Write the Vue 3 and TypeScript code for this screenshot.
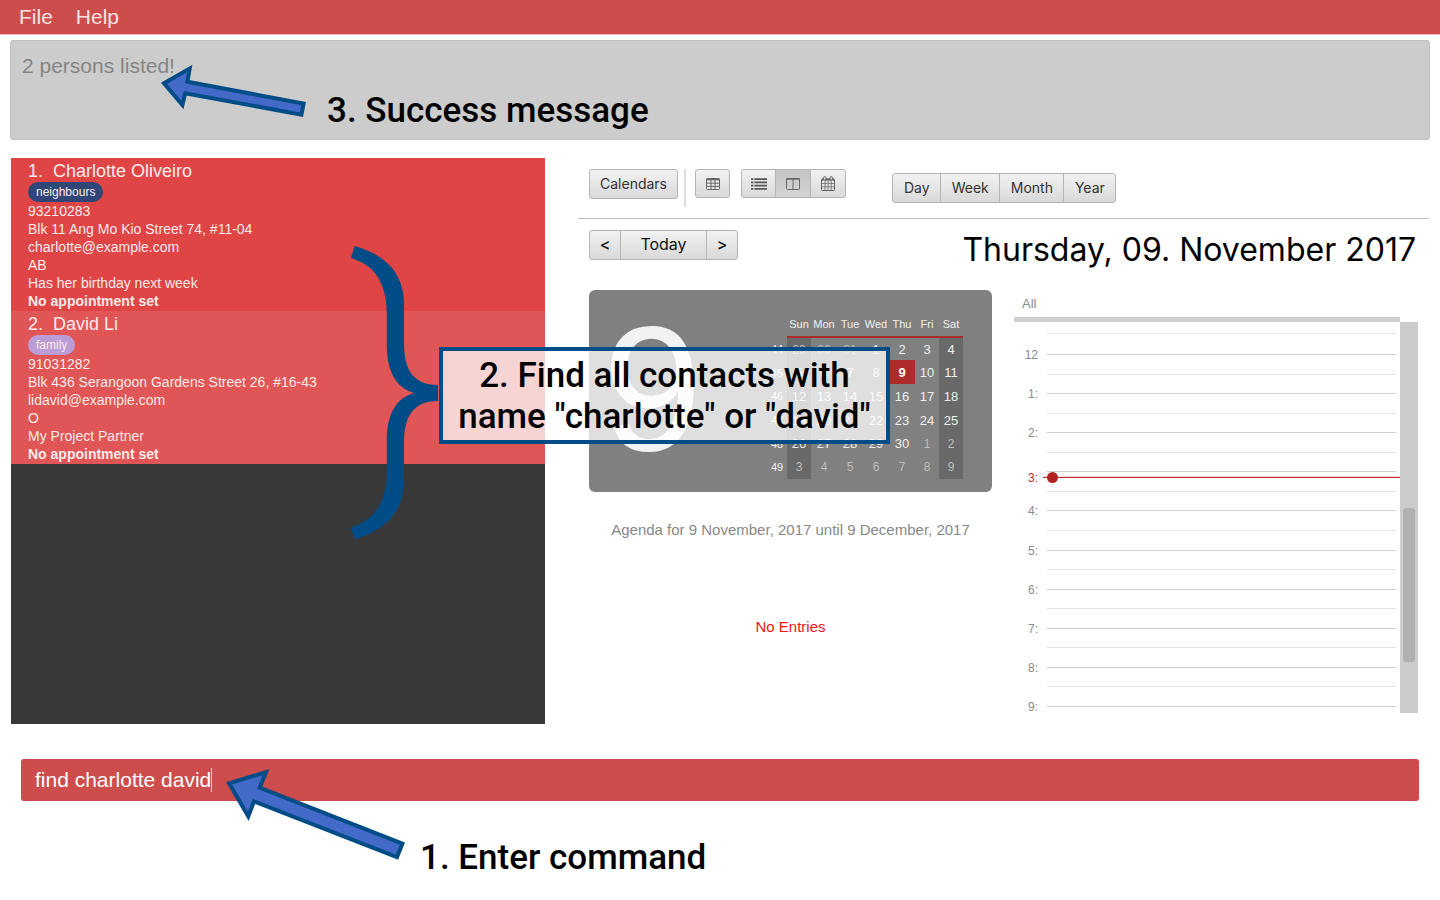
<script setup lang="ts">
import { ref } from 'vue'

interface Person {
  id: number
  name: string
  tag: string
  tagClass: string
  lines: string[]
}

interface DayCell {
  day: number
  muted?: boolean
  today?: boolean
}

interface Week {
  week: number
  days: DayCell[]
}

const command = ref('find charlotte david')

const persons: Person[] = [
  {
    id: 1,
    name: 'Charlotte Oliveiro',
    tag: 'neighbours',
    tagClass: 'tag-navy',
    lines: ['93210283', 'Blk 11 Ang Mo Kio Street 74, #11-04', 'charlotte@example.com', 'AB', 'Has her birthday next week'],
  },
  {
    id: 2,
    name: 'David Li',
    tag: 'family',
    tagClass: 'tag-purple',
    lines: ['91031282', 'Blk 436 Serangoon Gardens Street 26, #16-43', 'lidavid@example.com', 'O', 'My Project Partner'],
  },
]

const weekdays = ['Sun', 'Mon', 'Tue', 'Wed', 'Thu', 'Fri', 'Sat']

// The grid opens on Sunday 29 October 2017, week 44.
const weeks: Week[] = Array.from({ length: 6 }, (_, w) => ({
  week: 44 + w,
  days: Array.from({ length: 7 }, (_, d) => {
    const date = new Date(2017, 9, 29 + w * 7 + d)
    return {
      day: date.getDate(),
      muted: date.getMonth() !== 10,
      today: date.getMonth() === 10 && date.getDate() === 9,
    }
  }),
}))

const hours = ['12', '1:', '2:', '', '4:', '5:', '6:', '7:', '8:']
const ranges = ['Day', 'Week', 'Month', 'Year']
</script>

<template>
  <div class="app">
    <nav class="menu">
      <button type="button">File</button>
      <button type="button">Help</button>
    </nav>

    <section class="result" role="status">2 persons listed!</section>

    <main class="main">
      <ul class="persons">
        <li v-for="p in persons" :key="p.id" class="person">
          <h2><span class="num">{{ p.id }}.</span>{{ p.name }}</h2>
          <div class="tags"><span class="tag" :class="p.tagClass">{{ p.tag }}</span></div>
          <p v-for="line in p.lines" :key="line">{{ line }}</p>
          <p class="appointment">No appointment set</p>
        </li>
      </ul>

      <section class="calendar">
        <div class="toolbar">
          <button type="button" class="btn calendars">Calendars</button>
          <span class="separator"></span>
          <button type="button" class="btn icon" aria-label="Add calendar">
            <svg width="14" height="12" viewBox="0 0 14 12"><rect x="0.5" y="0.5" width="13" height="11" rx="1" fill="none" stroke="#666" /><path d="M0 1.5H14" stroke="#666" stroke-width="1.6" /><path d="M1 5.2H13M1 8.4H13M5 2V11M9 2V11" stroke="#666" fill="none" /></svg>
          </button>
          <div class="group views">
            <button type="button" class="btn icon" aria-label="Agenda layout">
              <svg width="16" height="12" viewBox="0 0 16 12"><path d="M0 1.2H2.4M0 4.4H2.4M0 7.6H2.4M0 10.8H2.4M3.4 1.2H16M3.4 4.4H16M3.4 7.6H16M3.4 10.8H16" stroke="#555" stroke-width="1.7" /></svg>
            </button>
            <button type="button" class="btn icon selected" aria-label="Column layout" aria-pressed="true">
              <svg width="14" height="12" viewBox="0 0 14 12"><rect x="0.5" y="0.5" width="13" height="11" rx="1" fill="none" stroke="#666" /><path d="M0 1H14" stroke="#666" stroke-width="1.5" /><path d="M7 1V11" stroke="#666" /></svg>
            </button>
            <button type="button" class="btn icon" aria-label="Calendar layout">
              <svg width="14" height="15" viewBox="0 0 14 15"><rect x="0.5" y="3" width="13" height="11.5" rx="1" fill="none" stroke="#666" /><path d="M1 3.6H13" stroke="#666" stroke-width="2" /><path d="M1 7.4H13M1 10.8H13M4 4.5V14M7.1 4.5V14M10.2 4.5V14" stroke="#777" stroke-width="0.9" /><rect x="2.6" y="0.6" width="2.4" height="3.6" rx="1.1" fill="#e4e4e4" stroke="#666" /><rect x="9" y="0.6" width="2.4" height="3.6" rx="1.1" fill="#e4e4e4" stroke="#666" /></svg>
            </button>
          </div>
          <div class="group ranges">
            <button v-for="r in ranges" :key="r" type="button" class="btn">{{ r }}</button>
          </div>
        </div>

        <div class="datebar">
          <div class="group nav">
            <button type="button" class="btn arrow" aria-label="Previous day">&lt;</button>
            <button type="button" class="btn today">Today</button>
            <button type="button" class="btn arrow" aria-label="Next day">&gt;</button>
          </div>
          <h1>Thursday, 09. November 2017</h1>
        </div>

        <div class="day">
          <div class="overview">
            <div class="month">
              <div class="big">9</div>
              <table>
                <colgroup>
                  <col class="c20" />
                  <col class="c24" />
                  <col class="c26" />
                  <col class="c26" />
                  <col class="c26" />
                  <col class="c26" />
                  <col class="c24" />
                  <col class="c24" />
                </colgroup>
                <thead>
                  <tr>
                    <th class="week"></th>
                    <th v-for="d in weekdays" :key="d" scope="col">{{ d }}</th>
                  </tr>
                </thead>
                <tbody>
                  <tr v-for="w in weeks" :key="w.week">
                    <th class="week" scope="row">{{ w.week }}</th>
                    <td v-for="(c, i) in w.days" :key="i" :class="{ muted: c.muted, now: c.today }">{{ c.day }}</td>
                  </tr>
                </tbody>
              </table>
            </div>
            <p class="agenda">Agenda for 9 November, 2017 until 9 December, 2017</p>
            <p class="none">No Entries</p>
          </div>

          <div class="timeline">
            <div class="allday">All</div>
            <div class="body">
              <div class="slots">
                <div class="lead"></div>
                <div v-for="(h, i) in hours" :key="i" class="slot">
                  <span class="hour">{{ h }}</span>
                  <div v-if="h === ''" class="current"><span class="hour">3:</span><i></i></div>
                </div>
                <div class="tail"><span class="hour">9:</span></div>
              </div>
              <div class="scroll"><div class="thumb"></div></div>
            </div>
          </div>
        </div>
      </section>
    </main>

    <form class="command" @submit.prevent>
      <input v-model="command" type="text" aria-label="Command" spellcheck="false" />
      <span class="caret"></span>
    </form>

    <svg class="marks" width="450" height="870" viewBox="0 0 450 870" aria-hidden="true">
      <g fill="#446ac9" stroke="#004c86" stroke-width="4" stroke-miterlimit="10">
        <path d="M164 83.3L189.7 68.6L187.4 81.7L303.6 103.6L301.4 114.6L185.2 93.2L182.4 105Z" />
        <path d="M229 783.3L266 772.2L259.6 787.7L402.4 843.6L397 857.2L254 801.4L248.3 816.3Z" />
      </g>
      <path fill="#004c86" d="M354.6 246C373 251 386 260 393.6 270C400 279 404 290 404 304V343C404 368 412 385 438 385V401C412 401 404 418 404 443V481C404 495 400 506 393.6 515C386 525 373 534 354.6 539.3L351 527.7C363 523 371 518 376.4 510C383 501 386.8 488 386.8 472V441C386.8 414 396 398 414.3 393C396 388 386.8 371 386.8 345V313C386.8 297 383 285 376.4 275C371 267 363 262 351 257.7Z" />
    </svg>
    <p class="note success">3. Success message</p>
    <p class="note find">2. Find all contacts with<br />name "charlotte" or "david"</p>
    <p class="note enter">1. Enter command</p>
  </div>
</template>

<style>
body {
  margin: 0;
  background: #fff;
}
</style>

<style scoped>
.app {
  position: relative;
  min-height: 100vh;
  font-family: "Liberation Sans", Arial, sans-serif;
}
h1,
h2,
p,
ul {
  margin: 0;
  padding: 0;
  font-weight: 400;
}
button,
input {
  font-family: inherit;
  margin: 0;
}

.menu {
  display: flex;
  gap: 23px;
  height: 34px;
  padding-left: 19px;
  background: #cd4d4d;
  border-bottom: 1px solid #e9b5b5;
}
.menu button {
  padding: 0;
  border: 0;
  background: none;
  color: #fbe3e3;
  font-size: 21px;
}

.result {
  box-sizing: border-box;
  height: 100px;
  margin: 5px 10px 0;
  padding: 13px 11px;
  border: 1px solid #c0c0c0;
  border-radius: 3px;
  background: #ccc;
  color: #858585;
  font-size: 21px;
  line-height: 23px;
}

.main {
  display: flex;
  gap: 33px;
  margin: 18px 11px 0;
}
.persons {
  flex: 534 1 0;
  min-height: 566px;
  background: #383838;
  list-style: none;
  color: #fdeaea;
}
.person {
  padding: 3px 17px 1px;
  background: #df4545;
  font-size: 14px;
  line-height: 18px;
}
.person:nth-child(even) {
  background: #e05555;
}
.person h2 {
  font-size: 18px;
  line-height: 21px;
}
.num {
  margin-right: 10px;
}
.tags {
  display: flex;
  height: 20px;
}
.tag {
  padding: 0 8px;
  border-radius: 10px;
  font-size: 12px;
  line-height: 20px;
}
.tag-navy {
  background: #304578;
}
.tag-purple {
  background: #bb9cd6;
}
.person .appointment {
  font-weight: 700;
}

.calendar {
  flex: 851 1 0;
  min-width: 0;
}
.toolbar {
  display: flex;
  align-items: flex-start;
  height: 49px;
  padding: 11px 11px 0;
  border-bottom: 1px solid #bdbdbd;
}
.btn {
  box-sizing: border-box;
  height: 30px;
  padding: 0 0 2px;
  border: 1px solid #b4b4b4;
  border-radius: 3px;
  background: linear-gradient(#f2f2f2, #d9d9d9);
  color: #333;
  font-family: Inter, sans-serif;
  font-size: 14px;
}
.calendars {
  width: 89px;
}
.separator {
  width: 2px;
  height: 38px;
  margin: 0 9px 0 6px;
  background: #ddd;
}
.btn.icon {
  display: flex;
  align-items: center;
  justify-content: center;
  width: 35px;
  height: 29px;
  padding: 0;
}
.group {
  display: flex;
}
.group .btn:not(:first-child) {
  margin-left: -1px;
  border-top-left-radius: 0;
  border-bottom-left-radius: 0;
}
.group .btn:not(:last-child) {
  border-top-right-radius: 0;
  border-bottom-right-radius: 0;
}
.group .icon:not(:first-child) {
  width: 36px;
}
.btn.selected {
  background: linear-gradient(#c4c4c4, #d4d4d4);
}
.views {
  margin-left: 11px;
}
.ranges {
  margin: 4px 0 0 46px;
}
.ranges .btn {
  padding: 0 10px 2px 11px;
}

.datebar {
  display: flex;
  align-items: flex-start;
  justify-content: space-between;
  padding: 11px 13px 0 11px;
}
.nav .btn {
  color: #111;
  font-size: 16px;
}
.nav .arrow {
  width: 32px;
  font-weight: 500;
}
.nav .today {
  width: 87px;
}
h1 {
  color: #000;
  font-family: Inter, sans-serif;
  font-size: 32px;
  line-height: 40px;
}

.day {
  display: flex;
  gap: 22px;
  padding: 20px 11px 0;
}
.overview {
  flex: 403 1 0;
  text-align: center;
}
.month {
  display: flex;
  justify-content: space-between;
  box-sizing: border-box;
  height: 202px;
  padding: 26px 29px 0 14px;
  border-radius: 6px;
  background: #808080;
}
.big {
  width: 96px;
  color: #f2f2f2;
  font-size: 178px;
  line-height: 146px;
}
table {
  border-collapse: collapse;
  table-layout: fixed;
  width: 196px;
  height: 163px;
  color: #f0f0f0;
  font-size: 13px;
}
.c20 {
  width: 20px;
}
.c24 {
  width: 24px;
}
.c26 {
  width: 26px;
}
th,
td {
  padding: 1px 0 0;
  font-weight: 400;
}
thead th {
  height: 16px;
  padding: 0 0 4px;
  font-size: 11px;
}
thead th:not(.week) {
  border-bottom: 2px solid #ad2b2b;
}
.week {
  font-size: 11px;
}
tbody tr {
  height: 23px;
}
tbody tr:nth-child(even) {
  height: 24px;
}
tbody td:nth-child(2),
tbody td:last-child {
  background: #696969;
}
td.muted {
  color: #bdbdbd;
  font-size: 12px;
}
td.now {
  background: #ad2b2b;
  color: #fff;
  font-weight: 700;
}
.agenda {
  margin-top: 28px;
  color: #888;
  font-size: 15px;
  line-height: 20px;
}
.none {
  margin-top: 77px;
  color: #f01414;
  font-size: 15px;
  line-height: 20px;
}

.timeline {
  display: flex;
  flex-direction: column;
  flex: 404 1 0;
  color: #8a8a8a;
}
.allday {
  height: 27px;
  margin-right: 18px;
  padding-left: 8px;
  border-bottom: 5px solid #d0d0d0;
  font-size: 13px;
  line-height: 28px;
}
.body {
  display: flex;
  height: 391px;
}
.slots {
  display: flex;
  flex: 1;
  flex-direction: column;
}
.lead {
  height: 20px;
  margin: 11px 4px 0 33px;
  border-top: 1px solid #e4e4e4;
}
.slot {
  position: relative;
  flex: 1;
}
.slot::before,
.slot::after,
.tail::before {
  content: "";
  position: absolute;
  top: 0;
  left: 33px;
  right: 4px;
  height: 1px;
  background: #d0d0d0;
}
.slot::after {
  top: 50%;
  background: #e4e4e4;
}
.tail {
  position: relative;
  height: 7px;
}
.hour {
  position: absolute;
  top: -7px;
  left: 0;
  width: 24px;
  font-size: 12px;
  line-height: 16px;
  text-align: right;
}
.current {
  position: absolute;
  top: 6px;
  left: 0;
  right: 0;
  z-index: 1;
  color: #c22b35;
}
.current::before {
  content: "";
  position: absolute;
  top: 0;
  left: 29px;
  right: 0;
  height: 1px;
  background: #bf3038;
  box-shadow: 0 -1px #f0d0d0;
}
.current i {
  position: absolute;
  top: -5px;
  left: 33px;
  width: 11px;
  height: 11px;
  border-radius: 50%;
  background: #b22222;
}
.scroll {
  box-sizing: border-box;
  width: 18px;
  padding: 186px 3px 0;
  background: #ccc;
}
.thumb {
  height: 154px;
  border-radius: 3px;
  background: #b0b0b0;
}

.command {
  position: relative;
  margin: 35px 21px 0;
}
.command input {
  display: block;
  box-sizing: border-box;
  width: 100%;
  height: 42px;
  padding: 0 14px;
  border: 0;
  border-radius: 3px;
  outline: 0;
  background: #cd4d4d;
  color: #fff;
  font-size: 21px;
}
.caret {
  position: absolute;
  top: 9px;
  left: 190px;
  width: 1px;
  height: 24px;
  background: #f3d2d2;
}

.marks {
  position: absolute;
  top: 0;
  left: 0;
  pointer-events: none;
}
.note {
  position: absolute;
  color: #000;
  font-family: Roboto, sans-serif;
  font-size: 35px;
  font-weight: 500;
  line-height: 41px;
  white-space: nowrap;
}
.success {
  top: 90px;
  left: 327px;
}
.enter {
  top: 837px;
  left: 420px;
}
.find {
  top: 347px;
  left: 439px;
  box-sizing: border-box;
  width: 451px;
  height: 97px;
  padding-top: 4px;
  border: 4px solid #004c86;
  background: rgba(255, 255, 255, 0.75);
  text-align: center;
}
</style>
